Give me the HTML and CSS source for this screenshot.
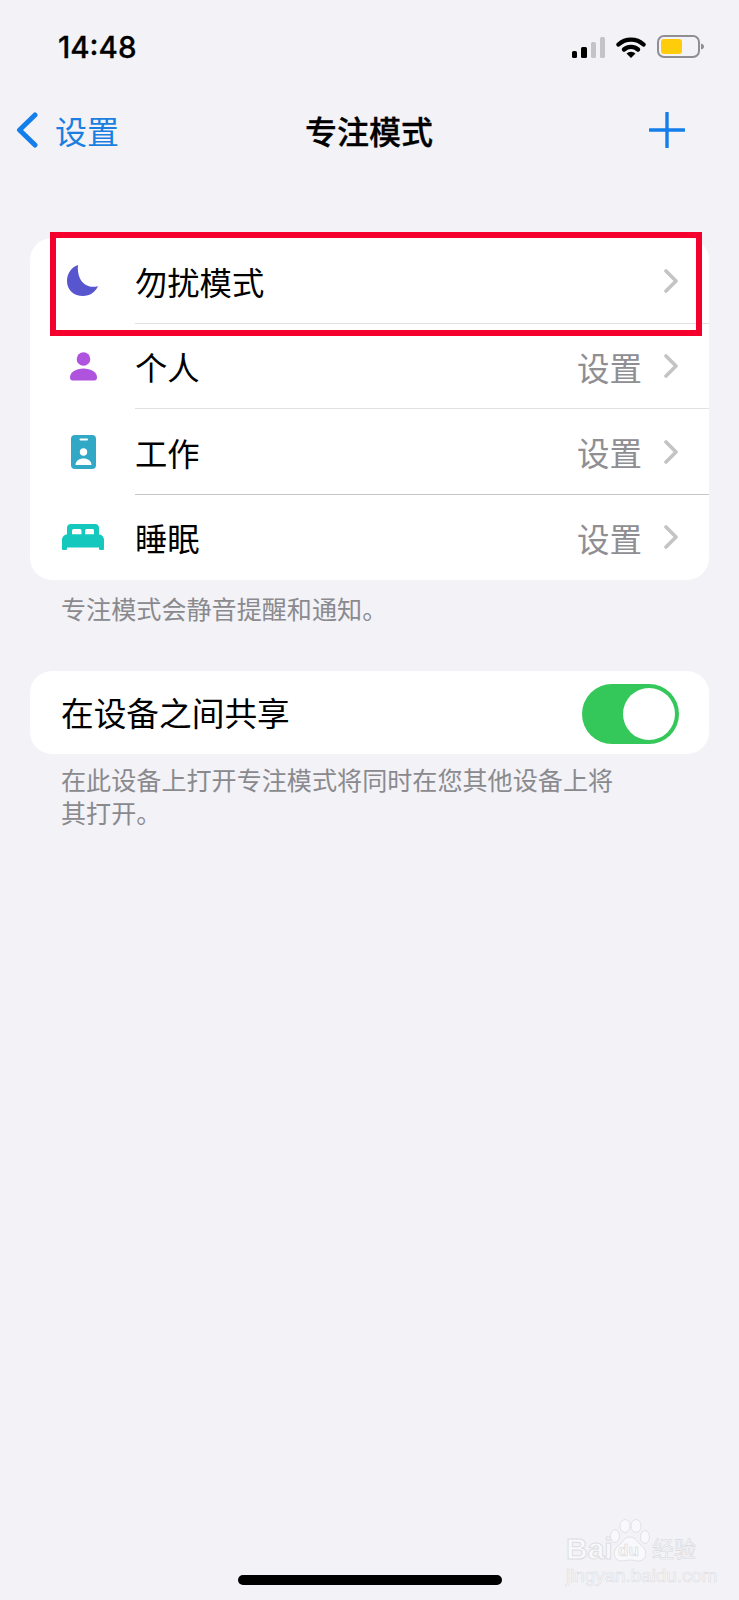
FILE: index.html
```html
<!DOCTYPE html>
<html>
<head>
  <title>专注模式</title>
  <link rel="stylesheet" href="styles.css">
</head>
<body>
  <div class="screen">
    <div class="status-bar">
      <span class="time">14:48</span>
      <div class="status-icons">
        <div class="signal">
          <span class="bar bar-1"></span>
          <span class="bar bar-2"></span>
          <span class="bar bar-3"></span>
          <span class="bar bar-4"></span>
        </div>
        <svg class="wifi" width="30" height="22" viewBox="0 0 30 22">
          <path d="M2.5 8.5A18.5 18.5 0 0 1 27.5 8.5" fill="none" stroke="#000" stroke-width="4.4" stroke-linecap="round"/>
          <path d="M8 13.5A10.5 10.5 0 0 1 22 13.5" fill="none" stroke="#000" stroke-width="4.4" stroke-linecap="round"/>
          <path d="M15 22L10.5 17.5A6.5 6.5 0 0 1 19.5 17.5Z" fill="#000"/>
        </svg>
        <svg class="battery" width="47" height="23" viewBox="0 0 47 23">
          <rect x="1" y="1" width="41" height="21" rx="6" fill="none" stroke="#8e8e93" stroke-width="2"/>
          <rect x="4" y="4" width="21" height="15" rx="3" fill="#ffcc0a"/>
          <path d="M44 8.5C46 9 47 10 47 11.5S46 14 44 14.5Z" fill="#8e8e93"/>
        </svg>
      </div>
    </div>

    <div class="nav-bar">
      <div class="nav-back">
        <svg width="22" height="36" viewBox="0 0 22 36">
          <path d="M19 3L3.5 18L19 33" fill="none" stroke="#147eea" stroke-width="5" stroke-linecap="round" stroke-linejoin="round"/>
        </svg>
        <span>设置</span>
      </div>
      <h1 class="nav-title">专注模式</h1>
      <svg class="nav-add" width="36" height="36" viewBox="0 0 36 36">
        <path d="M18 1V35M1 18H35" fill="none" stroke="#147eea" stroke-width="3.4" stroke-linecap="round"/>
      </svg>
    </div>

    <div class="card focus-list">
      <div class="row">
        <div class="row-icon">
          <svg width="32" height="32" viewBox="0 0 32 32">
            <path d="M11 0C4.5 2 0 8.5 0 16C0 25 7 31 16 31C23 31 28.5 27 31 21C27 22.5 23 22 19 20C13 17 10 8 11 0Z" fill="#5856cf"/>
          </svg>
        </div>
        <div class="row-body">
          <span class="row-label">勿扰模式</span>
          <svg class="chevron" width="14" height="24" viewBox="0 0 14 24">
            <path d="M2 2L12 12L2 22" fill="none" stroke="#c4c4c6" stroke-width="3.6" stroke-linecap="round" stroke-linejoin="round"/>
          </svg>
        </div>
      </div>
      <div class="row">
        <div class="row-icon">
          <svg width="27" height="29" viewBox="0 0 27 29">
            <circle cx="13.5" cy="7" r="6.8" fill="#af52de"/>
            <path d="M0 25.5C0 20 6 16.5 13.5 16.5S27 20 27 25.5C27 27.5 26 28.5 24.5 28.5H2.5C1 28.5 0 27.5 0 25.5Z" fill="#af52de"/>
          </svg>
        </div>
        <div class="row-body">
          <span class="row-label">个人</span>
          <span class="row-value">设置</span>
          <svg class="chevron" width="14" height="24" viewBox="0 0 14 24">
            <path d="M2 2L12 12L2 22" fill="none" stroke="#c4c4c6" stroke-width="3.6" stroke-linecap="round" stroke-linejoin="round"/>
          </svg>
        </div>
      </div>
      <div class="row">
        <div class="row-icon">
          <svg width="25" height="34" viewBox="0 0 25 34">
            <rect width="25" height="34" rx="4" fill="#30a8c6"/>
            <rect x="8.5" y="3.6" width="8.5" height="1.8" rx="0.9" fill="#fff"/>
            <circle cx="12.5" cy="17" r="3.7" fill="#fff"/>
            <path d="M4.5 30C4.5 26 8 23.5 12.5 23.5S20.5 26 20.5 30Z" fill="#fff"/>
          </svg>
        </div>
        <div class="row-body row-body-dark">
          <span class="row-label">工作</span>
          <span class="row-value">设置</span>
          <svg class="chevron" width="14" height="24" viewBox="0 0 14 24">
            <path d="M2 2L12 12L2 22" fill="none" stroke="#c4c4c6" stroke-width="3.6" stroke-linecap="round" stroke-linejoin="round"/>
          </svg>
        </div>
      </div>
      <div class="row">
        <div class="row-icon">
          <svg width="42" height="26" viewBox="0 0 42 26">
            <path d="M5 13V4C5 1.5 6.5 0 9 0H33C35.5 0 37 1.5 37 4V13Z" fill="#14c8bd"/>
            <path d="M10 10.5V7C10 5.5 11 5 12 5H17C18.5 5 19.5 5.5 19.5 7V10.5Z" fill="#fff"/>
            <path d="M23 10.5V7C23 5.5 24 5 25 5H30C31.5 5 32 5.5 32 7V10.5Z" fill="#fff"/>
            <path d="M0 16C0 13 2 10.5 5 10.5H37C40 10.5 42 13 42 16V24.5C42 25.5 41.5 26 40.5 26H38.5C37.5 26 37 25.5 37 24.5V23.5H5V24.5C5 25.5 4.5 26 3.5 26H1.5C0.5 26 0 25.5 0 24.5Z" fill="#14c8bd"/>
          </svg>
        </div>
        <div class="row-body row-body-last">
          <span class="row-label">睡眠</span>
          <span class="row-value">设置</span>
          <svg class="chevron" width="14" height="24" viewBox="0 0 14 24">
            <path d="M2 2L12 12L2 22" fill="none" stroke="#c4c4c6" stroke-width="3.6" stroke-linecap="round" stroke-linejoin="round"/>
          </svg>
        </div>
      </div>
      <div class="highlight"></div>
    </div>
    <p class="note note-first">专注模式会静音提醒和通知。</p>

    <div class="card share-row">
      <span class="row-label share-label">在设备之间共享</span>
      <div class="toggle"><span class="knob"></span></div>
    </div>
    <p class="note note-second">在此设备上打开专注模式将同时在您其他设备上将<br>其打开。</p>

    <div class="home-bar"></div>

    <div class="watermark">
      <div class="wm-logo">
        <span class="wm-bai">Bai</span>
        <div class="wm-paw">
          <svg width="40" height="44" viewBox="0 0 40 44">
            <g fill="#f9f9fb" stroke="#e2e2e6" stroke-width="1">
              <ellipse cx="5" cy="17" rx="4.5" ry="6.5"/>
              <ellipse cx="15" cy="7" rx="5" ry="6.5"/>
              <ellipse cx="26" cy="7" rx="5" ry="6.5"/>
              <ellipse cx="35" cy="18" rx="4.5" ry="6.5"/>
              <path d="M20 18C26 18 28 25 33 28C38 32 36 42 29 42C25 42 23 41 20 41S15 42 11 42C4 42 2 32 7 28C12 25 14 18 20 18Z"/>
            </g>
          </svg>
          <span class="wm-du">du</span>
        </div>
        <span class="wm-cn">经验</span>
      </div>
      <div class="wm-url">jingyan.baidu.com</div>
    </div>
  </div>
</body>
</html>
```

FILE: styles.css
```css
* {
  box-sizing: border-box;
}
body {
  margin: 0;
  background-color: #f2f2f7;
  font-family: Inter, "Noto Sans CJK SC", sans-serif;
  color: #000;
}
.screen {
  position: relative;
  display: flex;
  flex-direction: column;
  width: 739px;
  height: 1600px;
  overflow: hidden;
}

/* status bar */
.status-bar {
  display: flex;
  align-items: center;
  justify-content: space-between;
  height: 92px;
  padding: 1px 35px 0 58px;
  flex-shrink: 0;
}
.time {
  font-size: 29.5px;
  font-weight: 500;
  -webkit-text-stroke: 0.3px #000;
}
.status-icons {
  display: flex;
  align-items: flex-end;
  margin-top: -1px;
}
.signal {
  display: flex;
  align-items: flex-end;
  gap: 4px;
  height: 21px;
  margin-right: 11px;
}
.bar {
  width: 5px;
  border-radius: 1.5px;
  background-color: #000;
}
.bar-1 {
  height: 7px;
}
.bar-2 {
  height: 11px;
  width: 6px;
}
.bar-3 {
  height: 16px;
  background-color: #c4c4c8;
}
.bar-4 {
  height: 21px;
  background-color: #c4c4c8;
}
.wifi {
  margin-right: 11px;
}

/* nav bar */
.nav-bar {
  display: grid;
  grid-template-columns: 289px auto 1fr;
  align-items: center;
  height: 76px;
  padding: 0 54px 0 16px;
  flex-shrink: 0;
}
.nav-back {
  display: flex;
  align-items: center;
  gap: 17px;
  color: #1a7fe0;
  font-size: 32px;
}
.nav-title {
  margin: 0;
  font-size: 32px;
  font-weight: 500;
  -webkit-text-stroke: 0.3px #000;
}
.nav-add {
  justify-self: end;
}

/* cards */
.card {
  margin: 0 30px;
  background-color: #fff;
  border-radius: 22px;
}
.focus-list {
  position: relative;
  margin-top: 70px;
}
.row {
  display: flex;
  align-items: stretch;
  height: 85.5px;
  padding-left: 22px;
}
.row-icon {
  display: flex;
  align-items: center;
  justify-content: center;
  width: 62px;
  margin-right: 21px;
  flex-shrink: 0;
}
.row-body {
  display: flex;
  align-items: center;
  flex: 1;
  padding: 1px 31px 0 0;
  border-bottom: 1px solid #e2e2e4;
}
.row-body-dark {
  border-bottom-color: #c6c6c8;
}
.row-body-last {
  padding-top: 0;
  border-bottom: none;
}
.row-label {
  flex: 1;
  font-size: 32.3px;
}
.row-value {
  margin-right: 22px;
  font-size: 32.5px;
  color: #8e8e93;
}
.highlight {
  position: absolute;
  left: 20px;
  top: -6px;
  width: 652px;
  height: 104px;
  border: 6px solid #f5002d;
}

.note {
  margin: 0;
  padding: 0 61px;
  font-size: 25.1px;
  line-height: 33px;
  color: #8a8a8e;
}
.note-first {
  margin-top: 14px;
}

/* share row */
.share-row {
  display: flex;
  align-items: center;
  height: 83px;
  margin-top: 44px;
  padding: 2px 30px 0 31px;
}
.share-label {
  padding-bottom: 5px;
  font-size: 32.7px;
}
.toggle {
  display: flex;
  justify-content: flex-end;
  align-items: center;
  width: 97px;
  height: 60px;
  padding-right: 4px;
  border-radius: 30px;
  background-color: #34c759;
}
.knob {
  width: 52px;
  height: 52px;
  border-radius: 50%;
  background-color: #fff;
}
.note-second {
  margin-top: 11px;
}

/* home indicator */
.home-bar {
  width: 264px;
  height: 10px;
  margin: auto auto 15px;
  border-radius: 5px;
  background-color: #000;
}

/* watermark sits over the page */
.watermark {
  position: absolute;
  left: 566px;
  top: 1519px;
  width: 134px;
}
.wm-logo {
  display: flex;
  align-items: flex-end;
  height: 44px;
}
.wm-bai,
.wm-du,
.wm-cn,
.wm-url {
  color: #f9f9fb;
  -webkit-text-stroke: 1px #dedee2;
}
.wm-bai {
  width: 44px;
  font-family: "Liberation Sans", sans-serif;
  font-size: 30px;
  font-weight: 700;
  line-height: 28px;
}
.wm-paw {
  position: relative;
  width: 42px;
  height: 44px;
  flex-shrink: 0;
}
.wm-du {
  position: absolute;
  left: 8px;
  bottom: 2px;
  font-family: "Liberation Sans", sans-serif;
  font-size: 17px;
  font-weight: 700;
  -webkit-text-stroke: 0.6px #d8d8dc;
}
.wm-cn {
  font-size: 22px;
  line-height: 28px;
  -webkit-text-stroke: 0.6px #d8d8dc;
}
.wm-url {
  margin-top: 5px;
  font-family: "Liberation Sans", sans-serif;
  font-size: 18.8px;
  line-height: 16px;
  -webkit-text-stroke: 0.6px #dedee2;
  white-space: nowrap;
}
```
